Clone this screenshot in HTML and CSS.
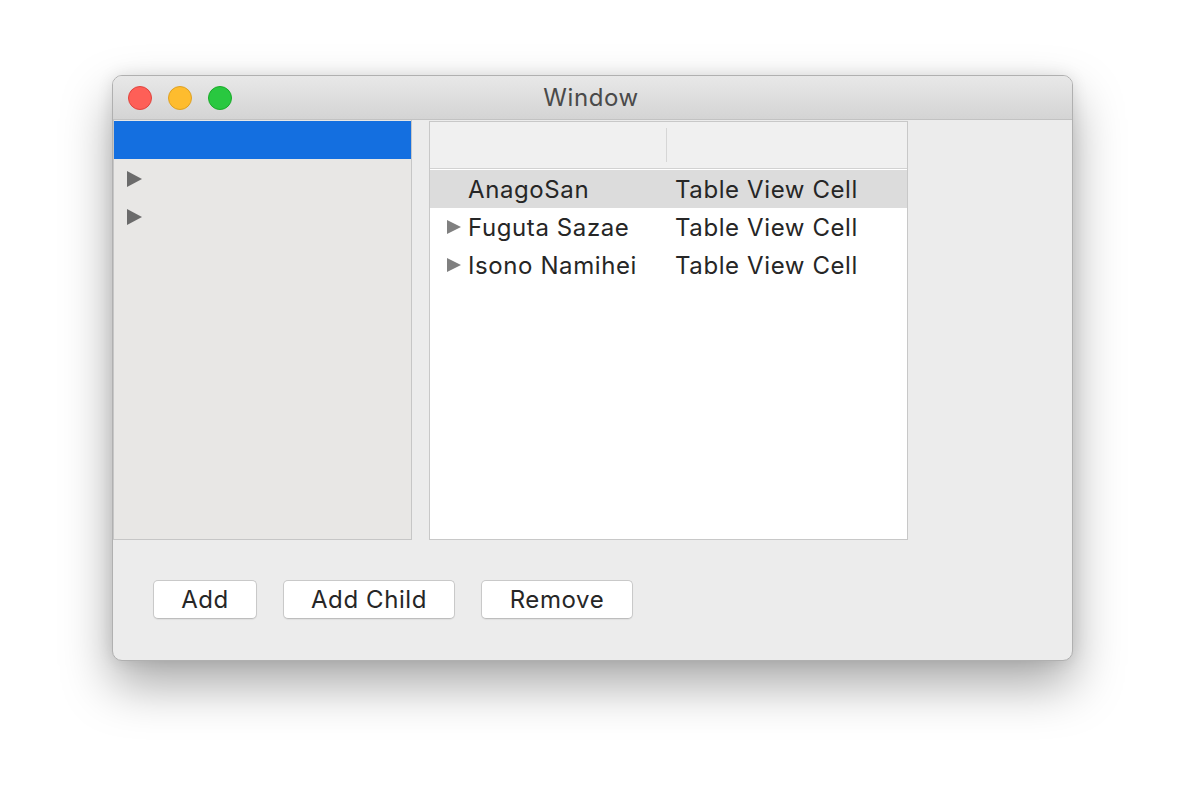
FILE: index.html
```html
<!DOCTYPE html>
<html>
<head>
<meta charset="utf-8">
<link rel="stylesheet" href="styles.css">
</head>
<body>
<div class="window">
  <div class="titlebar">
    <div class="lights">
      <span class="light red"></span>
      <span class="light yellow"></span>
      <span class="light green"></span>
    </div>
    <div class="title">Window</div>
  </div>
  <div class="content">
    <div class="panes">
      <div class="sidebar">
        <div class="srow selected"></div>
        <div class="srow"><span class="tri dark"></span></div>
        <div class="srow"><span class="tri dark"></span></div>
      </div>
      <div class="table">
        <div class="thead">
          <div class="th col1"></div>
          <div class="th col2"></div>
        </div>
        <div class="trow hl">
          <div class="td col1"><span class="tri-space"></span>AnagoSan</div>
          <div class="td col2">Table View Cell</div>
        </div>
        <div class="trow">
          <div class="td col1"><span class="tri light-tri"></span>Fuguta Sazae</div>
          <div class="td col2">Table View Cell</div>
        </div>
        <div class="trow">
          <div class="td col1"><span class="tri light-tri"></span>Isono Namihei</div>
          <div class="td col2">Table View Cell</div>
        </div>
      </div>
    </div>
    <div class="buttons">
      <button class="btn w-add">Add</button>
      <button class="btn w-child">Add Child</button>
      <button class="btn w-remove">Remove</button>
    </div>
  </div>
</div>
</body>
</html>
```

FILE: styles.css
```css
html, body {
  margin: 0;
  padding: 0;
  background: #ffffff;
}
body {
  width: 1184px;
  height: 808px;
  overflow: hidden;
  font-family: Inter, "Liberation Sans", sans-serif;
  color: #262626;
}
.window {
  margin: 75px 0 0 112px;
  width: 961px;
  height: 586px;
  box-sizing: border-box;
  border: 1px solid #b0b0b0;
  border-radius: 10px;
  overflow: hidden;
  background: #ececec;
  box-shadow: 0 24px 50px rgba(0, 0, 0, 0.34), 0 0 16px rgba(0, 0, 0, 0.10);
  display: flex;
  flex-direction: column;
}
.titlebar {
  height: 43px;
  flex: none;
  background: linear-gradient(#e8e8e8, #d4d4d4);
  border-bottom: 1px solid #c2c2c2;
  display: flex;
  align-items: center;
  position: relative;
}
.lights {
  display: flex;
  gap: 16px;
  padding-left: 15px;
  position: relative;
  z-index: 1;
}
.light {
  width: 24px;
  height: 24px;
  border-radius: 50%;
  box-sizing: border-box;
}
.red { background: #fe5f57; border: 1px solid #e0443e; }
.yellow { background: #febc2e; border: 1px solid #dea123; }
.green { background: #29c840; border: 1px solid #1aab29; }
.title {
  position: absolute;
  left: 0;
  right: 3px;
  top: 0;
  bottom: 0;
  display: flex;
  align-items: center;
  justify-content: center;
  font-size: 24px;
  letter-spacing: 0.6px;
  color: #4a4a4a;
}
.content {
  flex: 1;
  display: flex;
  flex-direction: column;
}
.panes {
  display: flex;
  align-items: flex-start;
  gap: 17px;
}
.sidebar {
  width: 299px;
  height: 420px;
  box-sizing: border-box;
  background: #e8e7e5;
  border: 1px solid #c6c6c6;
  border-top: none;
  padding-top: 1px;
}
.srow {
  height: 38px;
  display: flex;
  align-items: center;
  padding-left: 13px;
}
.srow.selected {
  background: #146fe0;
}
.srow + .srow {
  padding-top: 1px;
  height: 37px;
}
.tri {
  width: 0;
  height: 0;
  border-top: 8px solid transparent;
  border-bottom: 8px solid transparent;
  border-left: 15px solid #6b6b6b;
}
.tri.light-tri {
  border-top-width: 7px;
  border-bottom-width: 7px;
  border-left: 14px solid #808080;
  margin-right: 7px;
}
.tri-space {
  display: inline-block;
  width: 21px;
}
.table {
  margin-top: 1px;
  width: 479px;
  height: 419px;
  box-sizing: border-box;
  background: #ffffff;
  border: 1px solid #c8c8c8;
}
.thead {
  height: 46px;
  background: #f0f0f0;
  border-bottom: 1px solid #d2d2d2;
  display: flex;
  align-items: center;
  margin-bottom: 1px;
}
.col1 {
  width: 237px;
  box-sizing: border-box;
}
.th.col1 {
  height: 34px;
  border-right: 1px solid #d6d6d6;
}
.trow {
  height: 38px;
  display: flex;
  align-items: center;
  font-size: 24px;
  letter-spacing: 0.6px;
}
.trow.hl {
  background: #dcdcdc;
}
.td.col1 {
  display: flex;
  align-items: center;
  padding-left: 17px;
}
.td.col2 {
  padding-left: 8px;
}
.buttons {
  display: flex;
  gap: 26px;
  padding: 40px 0 0 40px;
}
.btn {
  height: 39px;
  box-sizing: border-box;
  background: #ffffff;
  border: 1px solid #c9c9c9;
  border-bottom-color: #bdbdbd;
  border-radius: 5px;
  font-family: Inter, "Liberation Sans", sans-serif;
  font-size: 24px;
  letter-spacing: 0.6px;
  color: #262626;
  padding: 0;
  box-shadow: 0 1px 1px rgba(0, 0, 0, 0.06);
}
.w-add { width: 104px; }
.w-child { width: 172px; }
.w-remove { width: 152px; }
```
